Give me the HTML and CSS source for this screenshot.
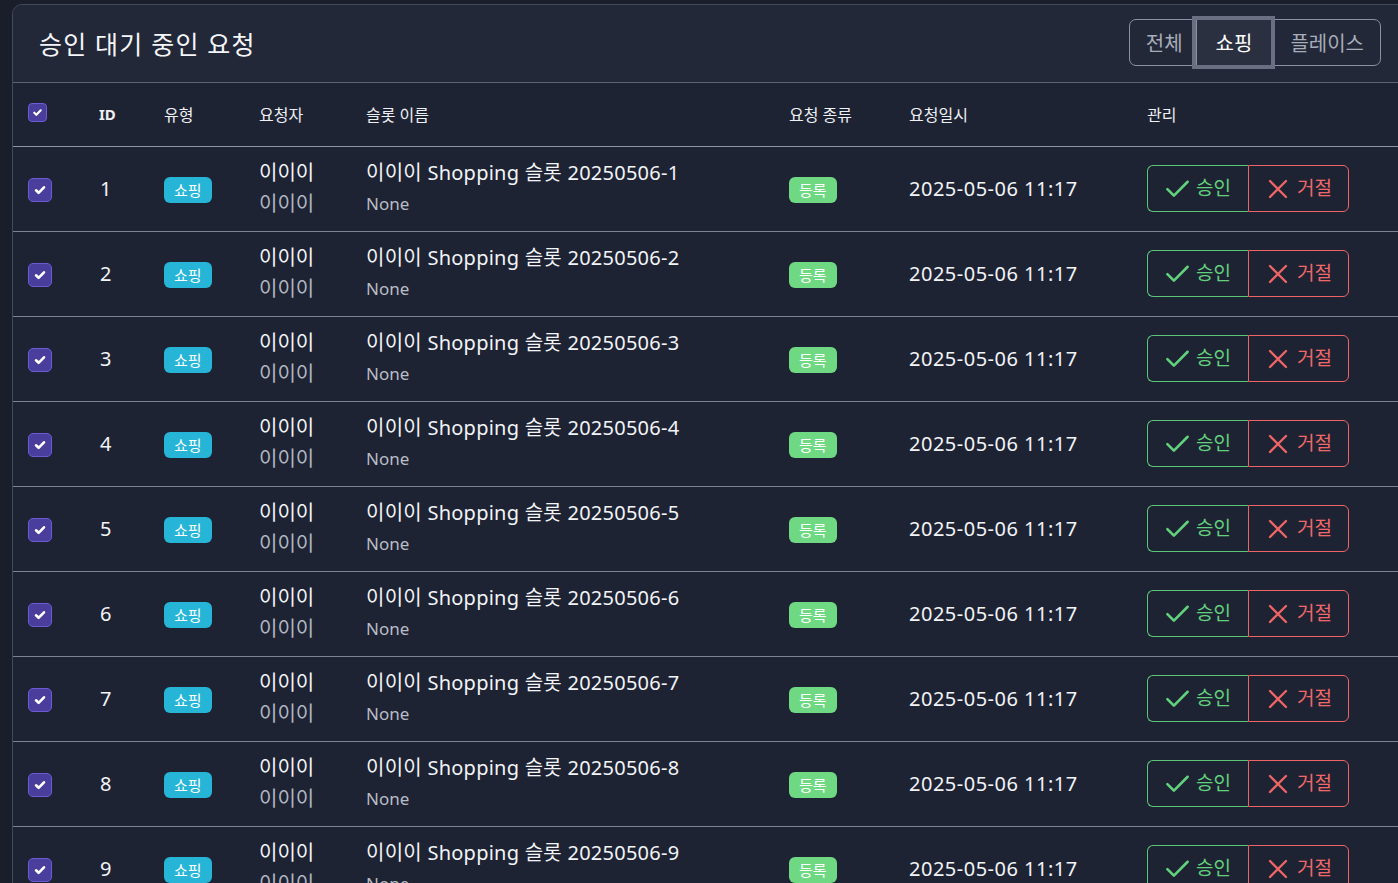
FILE: index.html
```html
<!DOCTYPE html>
<html lang="ko">
<head>
<meta charset="utf-8">
<link rel="stylesheet" href="styles.css">
</head>
<body>
<div class="card">
  <div class="card-header">
    <h2 class="title">승인 대기 중인 요청</h2>
    <div class="tabs">
      <button class="tab">전체</button>
      <button class="tab active">쇼핑</button>
      <button class="tab">플레이스</button>
    </div>
  </div>
  <table class="tbl">
    <colgroup>
      <col class="c1"><col class="c2"><col class="c3"><col class="c4"><col class="c5"><col class="c6"><col class="c7"><col class="c8">
    </colgroup>
    <thead>
      <tr>
        <th><span class="cb small"><svg viewBox="0 0 16 16"><path d="M4 8.3l2.6 2.5L12 5.3" /></svg></span></th>
        <th class="bold">ID</th>
        <th>유형</th>
        <th>요청자</th>
        <th>슬롯 이름</th>
        <th>요청 종류</th>
        <th>요청일시</th>
        <th>관리</th>
      </tr>
    </thead>
    <tbody id="rows"></tbody>
  </table>
</div>
<script>
var tb = document.getElementById('rows');
var html = '';
for (var i = 1; i <= 9; i++) {
  html += '<tr>' +
    '<td><span class="cb"><svg viewBox="0 0 16 16"><path d="M4 8.3l2.6 2.5L12 5.3" /></svg></span></td>' +
    '<td class="id">' + i + '</td>' +
    '<td><span class="badge cyan">쇼핑</span></td>' +
    '<td><div class="l1">이이이</div><div class="l2">이이이</div></td>' +
    '<td><div class="l1 name">이이이 Shopping 슬롯 20250506-' + i + '</div><div class="l2 none">None</div></td>' +
    '<td><span class="badge green">등록</span></td>' +
    '<td class="date">2025-05-06 11:17</td>' +
    '<td><div class="actions">' +
      '<button class="act ok"><svg viewBox="0 0 24 24"><path d="M3 12.5l5.8 5.8L21 6"/></svg>승인</button>' +
      '<button class="act no"><svg viewBox="0 0 24 24"><path d="M4 4l16 16M20 4L4 20"/></svg>거절</button>' +
    '</div></td>' +
  '</tr>';
}
tb.innerHTML = html;
</script>
</body>
</html>
```

FILE: styles.css
```css
html, body {
  margin: 0;
  padding: 0;
  background: #1a1e2a;
  overflow: hidden;
  height: 883px;
}
body {
  padding: 4px 0 0 12px;
  font-family: "Noto Sans", "Noto Sans CJK KR", sans-serif;
  color: #f2f4f7;
}
.card {
  width: 1396px;
  background: #1e2333;
  border: 1px solid #434a5b;
  border-radius: 10px;
  box-sizing: border-box;
}
.card-header {
  display: flex;
  align-items: center;
  justify-content: space-between;
  height: 78px;
  padding: 0 26px 0 26px;
  background: #232838;
  border-bottom: 1px solid #5b6273;
  border-radius: 10px 10px 0 0;
  box-sizing: border-box;
}
.title {
  margin: 0;
  font-size: 25px;
  font-weight: 400;
  color: #f4f6f9;
  letter-spacing: 1.2px;
  margin-top: -2px;
}
.tabs {
  display: flex;
  border: 1px solid #8a91a0;
  border-radius: 7px;
  height: 47px;
  box-sizing: border-box;
  margin-top: -2px;
}
.tab {
  background: transparent;
  border: none;
  font-family: inherit;
  font-size: 20px;
  color: #a7adb9;
  padding: 0 13px 0 16px;
  height: 45px;
}
.tab:first-child { border-radius: 6px 0 0 6px; }
.tab + .tab { border-left: 1px solid #8a91a0; }
.tab:last-child { padding: 0 16px 0 18px; }
.tab.active {
  color: #ffffff;
  background: #2b3041;
  outline: 4px solid #6a7081;
  outline-offset: 0;
  position: relative;
  z-index: 1;
  padding: 0 19px;
}
.tbl {
  border-collapse: collapse;
  table-layout: fixed;
  width: 100%;
}
.c1 { width: 71px; }
.c2 { width: 65px; }
.c3 { width: 95px; }
.c4 { width: 107px; }
.c5 { width: 423px; }
.c6 { width: 120px; }
.c7 { width: 238px; }
th, td {
  text-align: left;
  padding: 0 0 0 15px;
  vertical-align: middle;
}
thead tr {
  height: 63px;
  border-bottom: 1px solid #8e95a4;
}
th {
  font-size: 16px;
  font-weight: 400;
  color: #eef0f4;
  padding-top: 0;
}
th.bold { font-weight: 700; font-size: 15px; }
tbody tr {
  height: 85px;
  border-bottom: 1px solid #7c8392;
}
.cb {
  display: inline-flex;
  align-items: center;
  justify-content: center;
  width: 24px;
  height: 24px;
  box-sizing: border-box;
  background: #4a3e9c;
  border: 1.5px solid #6d5ad6;
  border-radius: 5px;
  vertical-align: middle;
  margin-top: 2px;
}
.cb.small {
  width: 19px;
  height: 19px;
  border-radius: 4px;
  margin-top: -6px;
}
.cb svg {
  width: 16px;
  height: 16px;
  fill: none;
  stroke: #ffffff;
  stroke-width: 2.6;
  stroke-linecap: round;
  stroke-linejoin: round;
}
.cb.small svg { width: 13px; height: 13px; }
.id {
  font-size: 20px;
  color: #f2f4f7;
  padding-left: 16px;
}
.badge {
  display: inline-block;
  font-size: 15px;
  color: #ffffff;
  padding: 0 10px;
  height: 26px;
  line-height: 26px;
  border-radius: 6px;
  margin-top: 2px;
}
.badge.cyan { background: #26b5d6; }
.badge.green { background: #6fd883; }
.l1 {
  font-size: 20px;
  line-height: 26px;
  color: #f2f4f7;
  margin-top: 0;
}
.l1.name { letter-spacing: 0.25px; }
.l2 {
  font-size: 20px;
  line-height: 26px;
  color: #b1b6c1;
  margin-top: 5px;
}
.l2.none { font-size: 17px; color: #b9bdc7; }
.date {
  font-size: 20px;
  color: #f2f4f7;
  letter-spacing: 0.5px;
}
.actions {
  display: flex;
  margin-top: 0;
}
.act {
  display: flex;
  align-items: center;
  gap: 5px;
  height: 47px;
  width: 101px;
  box-sizing: border-box;
  background: transparent;
  font-family: inherit;
  font-size: 19px;
  padding: 0 0 4px 16px;
}
.act svg {
  width: 27px;
  height: 27px;
  fill: none;
  stroke-width: 2.3;
  stroke-linecap: round;
  stroke-linejoin: round;
  margin-top: 4px;
}
.act.ok {
  color: #62d17c;
  border: 1px solid #5cc677;
  border-right: none;
  border-radius: 6px 0 0 6px;
}
.act.ok svg { stroke: #62d17c; }
.act.no {
  color: #f06868;
  border: 1px solid #ee6464;
  border-radius: 0 6px 6px 0;
  padding-left: 17px;
  gap: 7px;
}
.act.no svg { stroke: #f06565; width: 24px; height: 24px; }
```
